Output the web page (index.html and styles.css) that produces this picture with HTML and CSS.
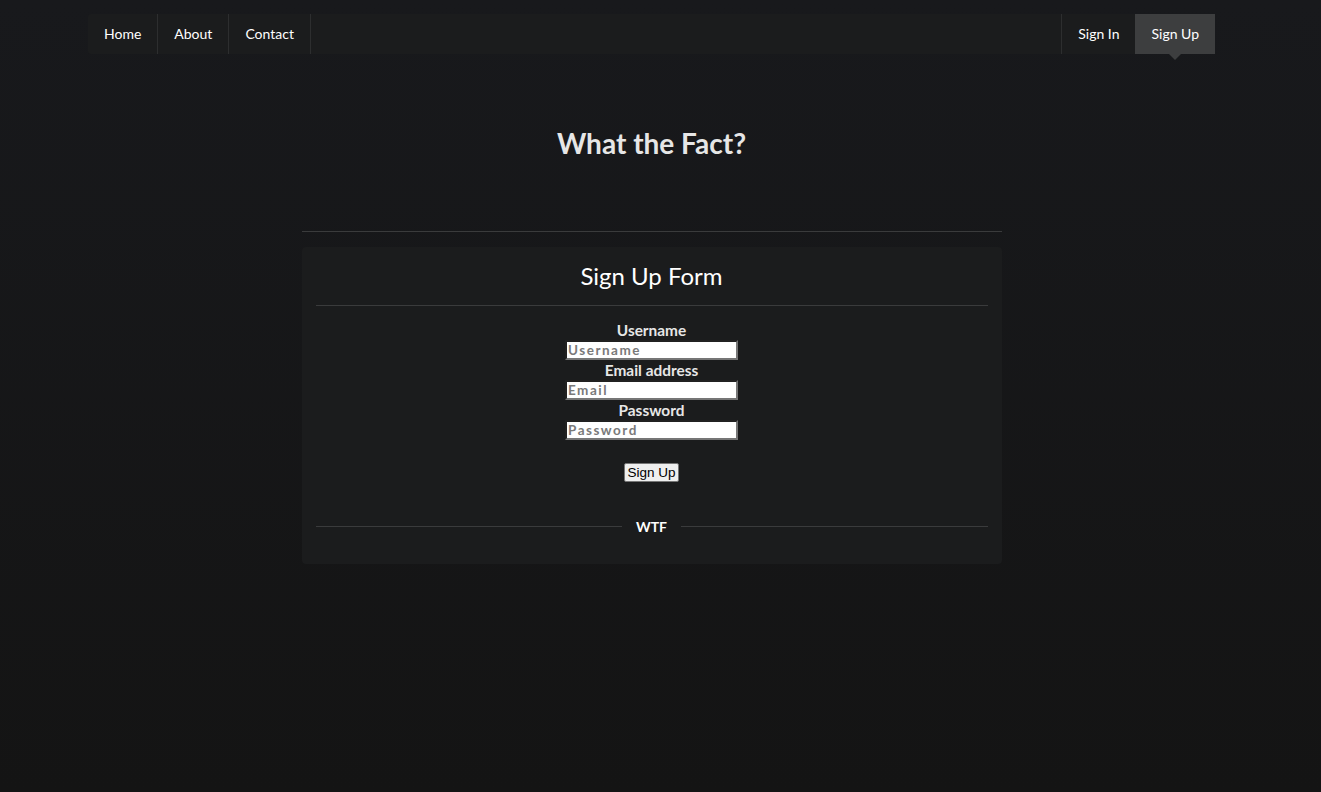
FILE: index.html
```html
<!DOCTYPE html>
<html>
<head>
<meta charset="utf-8">
<link rel="stylesheet" href="styles.css">
</head>
<body>
<div class="page">
  <nav class="menu">
    <a class="item">Home</a>
    <a class="item">About</a>
    <a class="item">Contact</a>
    <div class="right">
      <a class="item">Sign In</a>
      <a class="item active">Sign Up</a>
    </div>
  </nav>
  <h1 class="title">What the Fact?</h1>
  <div class="main">
    <hr class="rule">
    <div class="card">
      <h2 class="card-title">Sign Up Form</h2>
      <div class="divider"></div>
      <form class="form">
        <label class="label">Username</label>
        <input class="input" type="text" placeholder="Username">
        <label class="label">Email address</label>
        <input class="input" type="email" placeholder="Email">
        <label class="label">Password</label>
        <input class="input" type="password" placeholder="Password">
        <button class="btn" type="button">Sign Up</button>
      </form>
      <div class="text-divider"><span>WTF</span></div>
    </div>
  </div>
</div>
</body>
</html>
```
FILE: styles.css
```css
html, body {
  margin: 0;
  padding: 0;
}
body {
  min-height: 792px;
  padding-right: 18px;
  background: linear-gradient(#18191c, #141414);
  font-family: Lato, "Helvetica Neue", Arial, sans-serif;
  font-size: 14px;
  color: #e0e0e0;
}
.page {
  width: 1127px;
  margin: 0 auto;
  padding-top: 14px;
}
.menu {
  display: flex;
  height: 40px;
  background: #1b1c1d;
  border-radius: 3px;
}
.item {
  display: flex;
  align-items: center;
  padding: 0 16px 1px;
  color: #fff;
  font-size: 14px;
  position: relative;
  border-right: 1px solid #2d2e2f;
}
.right {
  margin-left: auto;
  display: flex;
}
.right .item {
  border-right: none;
  border-left: 1px solid #2d2e2f;
}
.right .item.active {
  background: #3d3e3f;
  border-left: none;
}
.item.active::after {
  content: "";
  position: absolute;
  left: 50%;
  bottom: -6px;
  margin-left: -6px;
  border-left: 6px solid transparent;
  border-right: 6px solid transparent;
  border-top: 6px solid #3d3e3f;
}
.title {
  margin: 72px 0 0;
  text-align: center;
  font-size: 28px;
  font-weight: 700;
  line-height: 34px;
  color: #e6e6e6;
}
.main {
  width: 700px;
  margin: 71px auto 0;
}
.rule {
  margin: 0;
  border: none;
  border-top: 1px solid #3a3b3c;
}
.card {
  margin-top: 15px;
  background: #1b1c1d;
  border-radius: 4px;
  padding: 14px 14px 29px;
}
.card-title {
  margin: 0;
  text-align: center;
  font-size: 24px;
  font-weight: 400;
  line-height: 30px;
  color: #fff;
}
.divider {
  margin-top: 14px;
  border-top: 1px solid #3a3b3c;
}
.form {
  display: flex;
  flex-direction: column;
  align-items: center;
  padding-top: 15px;
}
.label {
  font-weight: 700;
  font-size: 15.4px;
  line-height: 18px;
  color: #e6e6e6;
}
.input {
  width: 173px;
  height: 20px;
  box-sizing: border-box;
  padding: 0 1px;
  margin: 1px 0 1px;
  border: 2px inset #767676;
  background: #fff;
  font-family: Lato, sans-serif;
  font-size: 13.5px;
  letter-spacing: 1.5px;
  font-weight: 700;
}
.input::placeholder {
  color: #7a7a7a;
}
.btn {
  margin-top: 22px;
  font-family: Arial, "Liberation Sans", sans-serif;
  font-size: 13.5px;
  padding: 1px 2px;
  background: #efefef;
  border: 1px solid #767676;
  border-radius: 2px;
  color: #000;
}
.text-divider {
  display: flex;
  align-items: center;
  margin-top: 36px;
  gap: 14px;
  font-weight: 700;
  font-size: 14px;
  color: #fff;
}
.text-divider::before,
.text-divider::after {
  content: "";
  flex: 1;
  border-top: 1px solid #3a3b3c;
}
```
